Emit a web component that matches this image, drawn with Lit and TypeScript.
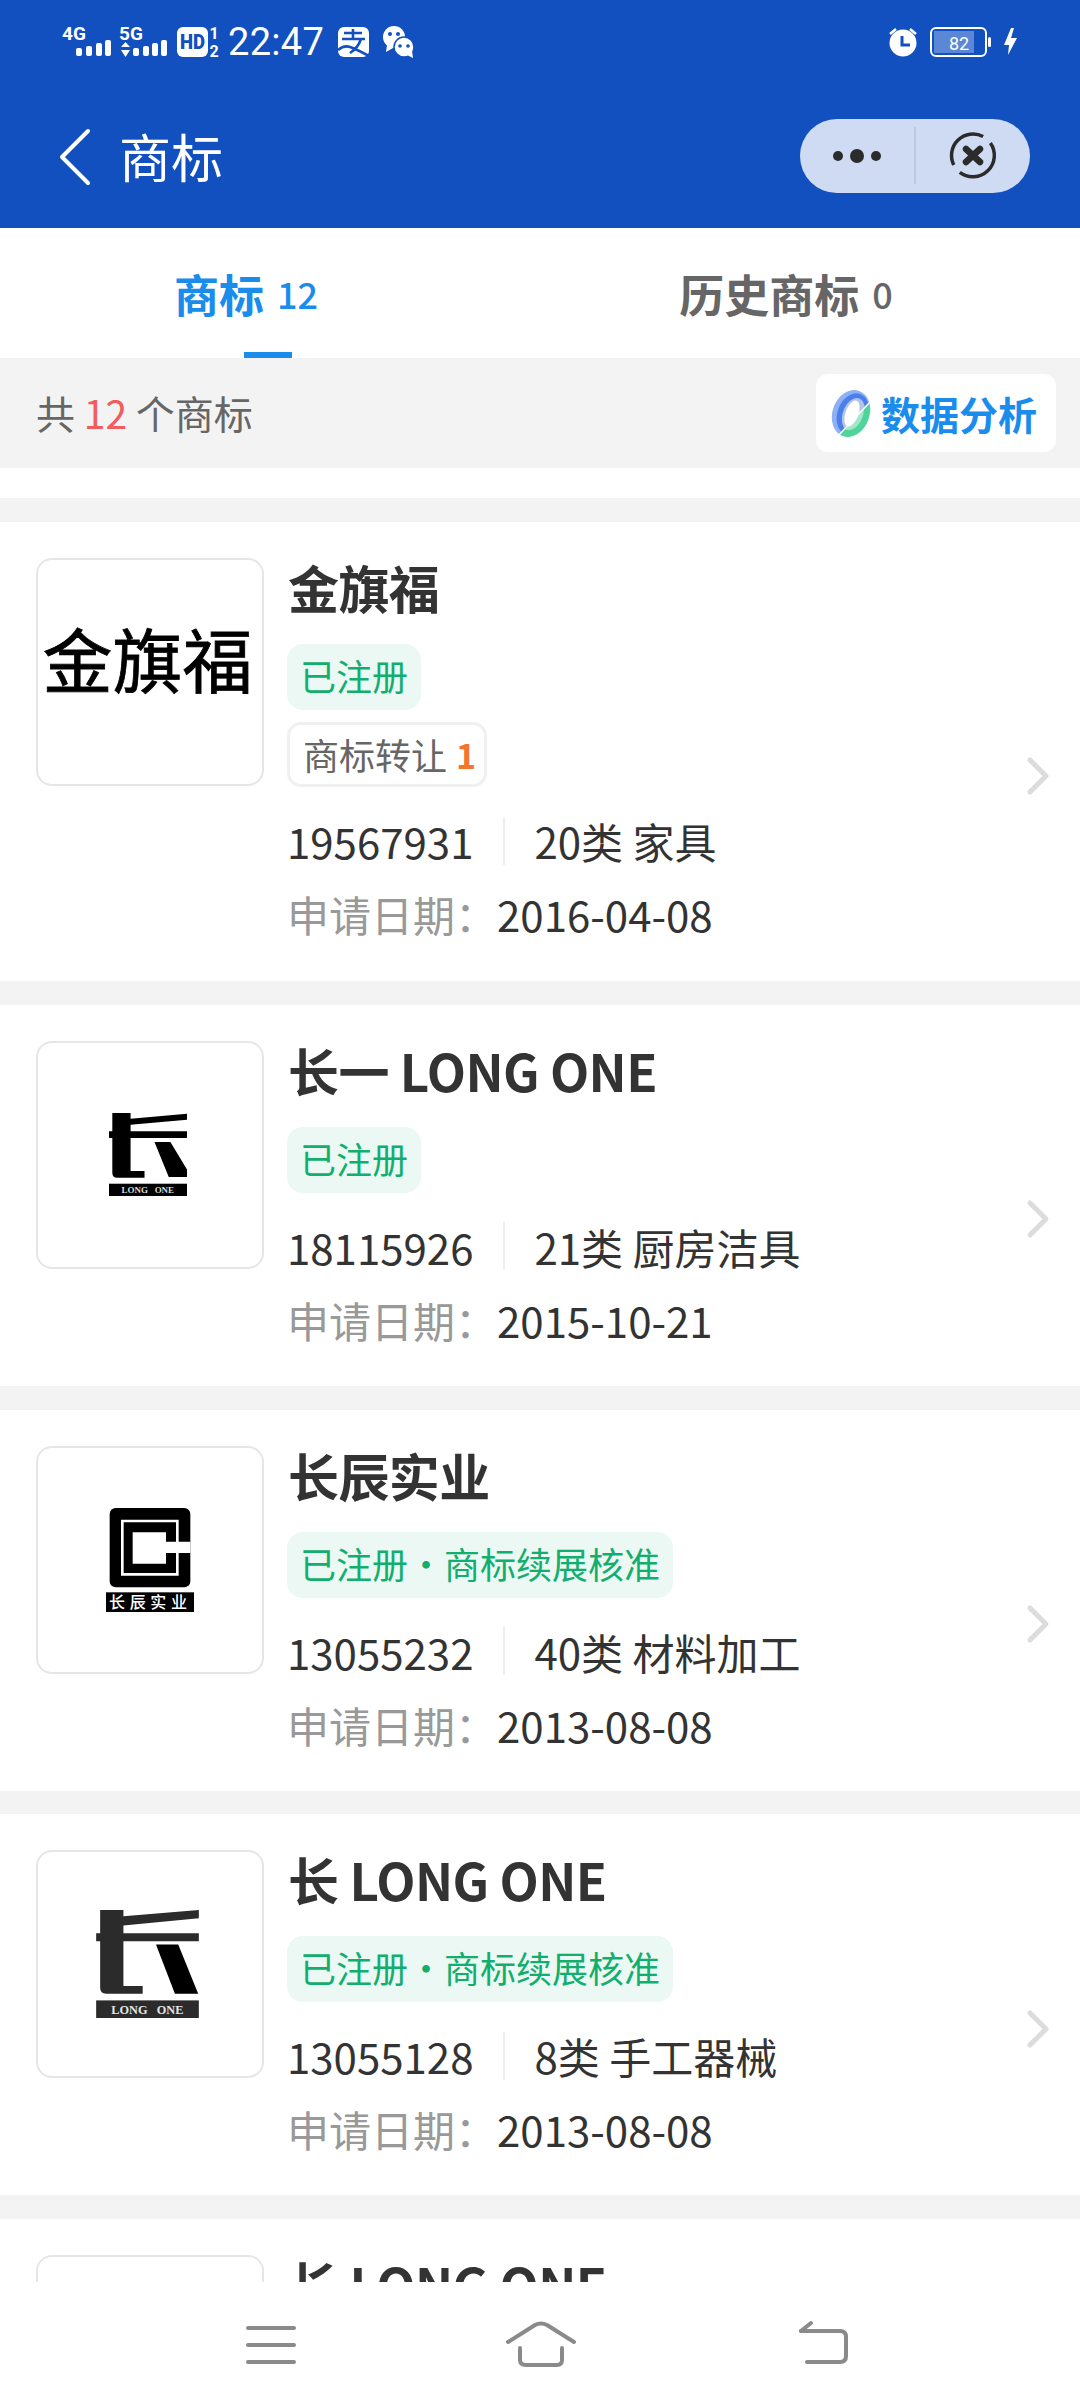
import { LitElement, html, css, svg } from "lit";
import { customElement } from "lit/decorators.js";

interface Item {
  title: string; status?: string; deal?: boolean; reg?: string; cat?: string; date?: string; logo: "text" | "cn1" | "cc" | "cn2" | "none";
}
const items: Item[] = [
  { title: "金旗福", status: "已注册", deal: true, reg: "19567931", cat: "20类 家具", date: "2016-04-08", logo: "text" },
  { title: "长一 LONG ONE", status: "已注册", reg: "18115926", cat: "21类 厨房洁具", date: "2015-10-21", logo: "cn1" },
  { title: "长辰实业", status: "已注册・商标续展核准", reg: "13055232", cat: "40类 材料加工", date: "2013-08-08", logo: "cc" },
  { title: "长 LONG ONE", status: "已注册・商标续展核准", reg: "13055128", cat: "8类 手工器械", date: "2013-08-08", logo: "cn2" },
  { title: "长 LONG ONE", logo: "none" },
];

const markSmall = svg`
  <svg class="mark shift" width="78" height="83" viewBox="0 0 235 250">
    <path fill="#000" d="M10 0H65V17L235 2V20L65 35V55H235V75H65V175H107V195H25Q10 195 10 180V75H0V55H10Z"/>
    <path fill="#000" d="M137 87H185L235 170V193H180Z"/>
    <rect y="213" width="235" height="37" fill="#000"/>
    <text x="117" y="241" text-anchor="middle" font-size="27" font-weight="700" fill="#ddd" font-family="Liberation Serif" xml:space="preserve">LONG   ONE</text>
  </svg>`;
const markLarge = svg`
  <svg class="mark shift" width="103" height="108" viewBox="0 0 309 325">
    <path fill="#2b2b2b" d="M12 0H82V19L309 0V25L82 47V70H309V94H82V229H140V252H30Q12 252 12 234V94H0V70H12Z"/>
    <path fill="#000" d="M180 104H247L307 252H237Z"/>
    <rect y="272" width="309" height="53" fill="#2b2b2b"/>
    <text x="154" y="312" text-anchor="middle" font-size="37" font-weight="700" fill="#e4e4e4" font-family="Liberation Serif" xml:space="preserve">LONG   ONE</text>
  </svg>`;
const markCc = svg`
  <svg class="mark" width="88" height="104" viewBox="252 205 264 312">
    <rect x="263" y="205" width="242" height="238" rx="18" fill="#000"/>
    <path fill="none" stroke="#fff" stroke-width="8" d="M466 310V244H301V404H466V340"/>
    <path fill="#fff" d="M332 278H432V306H505V340H432V372H332Z"/>
    <rect x="252" y="458" width="264" height="59" fill="#000"/>
    <text x="385" y="504" text-anchor="middle" font-size="48" font-weight="500" fill="#fff" font-family="Noto Sans CJK SC" letter-spacing="14">长辰实业</text>
  </svg>`;

@customElement("app-root")
export class AppRoot extends LitElement {
  static styles = css`
    :host { display: block; width: 1080px; height: 2408px; overflow: hidden; position: relative; background: #fff;
      font-family: "Noto Sans CJK SC", "Noto Sans", sans-serif; }
    .head { background: #1150be; height: 228px; color: #fff; position: relative; }
    .status { position: absolute; left: 0; top: 0; width: 1080px; height: 70px; }
    .time { position: absolute; left: 228px; top: 18px; font: 38px/48px Roboto, sans-serif; letter-spacing: .3px; }
    .bar { display: flex; align-items: center; height: 114px; padding-top: 100px; padding-left: 56px; }
    .title { font-size: 52px; line-height: 64px; margin-left: 25px; margin-top: -2px; }
    .capsule { position: absolute; left: 800px; top: 119px; width: 230px; height: 74px; border-radius: 37px; background: #cfdbf2; }
    .tabs { display: flex; height: 130px; position: relative; }
    .tab { flex: 1; box-sizing: border-box; padding-right: 48px; display: flex; justify-content: center; align-items: center; gap: 13px; font-size: 45px; font-weight: 700; color: #666; }
    .tab.on { color: #1a8cec; }
    .tab b { font-size: 36px; font-weight: 500; }
    .line { position: absolute; left: 244px; top: 124px; width: 48px; height: 6px; background: #1a8cec; }
    .count { height: 110px; box-sizing: border-box; background: #f3f3f3; display: flex; align-items: center; justify-content: space-between; padding: 0 24px 0 36px; font-size: 39px; color: #666; }
    .count > div:first-child { margin-top: -2px; }
    .count em { font-style: normal; color: #f25c5c; }
    .analysis { width: 240px; height: 78px; box-sizing: border-box; background: #fff; border-radius: 12px; display: flex; align-items: center; gap: 10px; padding-left: 15px; color: #1a8cec; font-size: 39px; font-weight: 700; }
    .gap { height: 30px; }
    .list { background: #f3f3f3; padding-top: 24px; display: flex; flex-direction: column; gap: 23.8px; }
    .card { background: #fff; display: flex; padding: 36px 0 30px 36px; position: relative; }
    .card:first-child { padding-bottom: 31px; }
    .logo { width: 228px; height: 228px; box-sizing: border-box; border: 2px solid #e6e6e6; border-radius: 16px; display: flex; align-items: center; justify-content: center; flex: none; }
    .logo.t { font-size: 70px; line-height: 1; font-weight: 400; color: #000; -webkit-text-stroke: 0.8px #000; white-space: nowrap; padding: 0 5px 29px 0; }
    .mark { display: block; overflow: visible; }
    .shift { margin-right: 5px; }
    .body { margin-left: 23px; display: flex; flex-direction: column; align-items: flex-start; }
    h2 { margin: 0 0 28px 1px; font-size: 51px; letter-spacing: -0.6px; line-height: 58px; font-weight: 700; color: #333; }
    .tags { display: flex; flex-direction: column; align-items: flex-start; gap: 12px; margin-bottom: 17px; }
    .tag { height: 66px; box-sizing: border-box; border-radius: 16px; background: #ebf8f3; color: #12ae6e; font-size: 36px; line-height: 63px; padding: 0 13px; }
    .deal { height: 65px; box-sizing: border-box; border: 3px solid #f0f0f0; border-radius: 14px; color: #666; font-size: 36px; line-height: 59px; padding: 0 8px 0 13px; display: flex; gap: 9px; }
    .deal b { color: #f5752f; font-weight: 700; font-size: 34px; }
    .row { display: flex; align-items: center; height: 73px; font-size: 42px; color: #333; margin-left: 0; }
    .sep { width: 2px; height: 48px; background: #eee; margin: 0 29px 0 30px; }
    .row span.k { color: #999; }
    .arrow { position: absolute; right: 30px; top: 50%; margin-top: 4px; }
    .nav { position: absolute; left: 0; bottom: 0; width: 1080px; height: 126px; background: #fff; }
    .nav svg { position: absolute; left: 0; top: 0; }
  `;

  logo(k: Item["logo"]) {
    if (k === "text") return html`<div class="logo t">金旗福</div>`;
    if (k === "cn1") return html`<div class="logo">${markSmall}</div>`;
    if (k === "cn2") return html`<div class="logo">${markLarge}</div>`;
    if (k === "cc") return html`<div class="logo">${markCc}</div>`;
    return html`<div class="logo"></div>`;
  }

  render() {
    return html`
      <div class="head">
        <div class="status">
          <svg width="1080" height="70" viewBox="0 0 1080 70" fill="#fff">
            <text x="62" y="40" font-size="19" font-weight="700" font-family="Roboto">4G</text>
            <text x="119" y="40" font-size="19" font-weight="700" font-family="Roboto">5G</text>
            <g><rect x="76" y="48" width="6" height="8" rx="2"/><rect x="86" y="46" width="6" height="10" rx="2"/><rect x="96" y="43" width="6" height="13" rx="2"/><rect x="105" y="40" width="6" height="16" rx="2"/></g>
            <path d="M121 47h9l-4.500-5ZM121 50h9l-4.500 7Z"/>
            <g><rect x="133" y="48" width="6" height="8" rx="2"/><rect x="143" y="46" width="6" height="10" rx="2"/><rect x="152" y="43" width="6" height="13" rx="2"/><rect x="161" y="40" width="6" height="16" rx="2"/></g>
            <rect x="177" y="27" width="31" height="30" rx="6"/>
            <text x="192.500" y="49" text-anchor="middle" font-size="20" font-weight="900" fill="#1150be" font-family="Roboto" textLength="25" lengthAdjust="spacingAndGlyphs">HD</text>
            <text x="214" y="39" text-anchor="middle" font-size="16" font-weight="700" font-family="Roboto">1</text>
            <text x="214" y="57" text-anchor="middle" font-size="16" font-weight="700" font-family="Roboto">2</text>
            <rect x="338" y="27" width="31" height="30" rx="6"/>
            <path fill="none" stroke="#1150be" stroke-width="2.600" d="M344 33h18M353 29v9M342 39h23M361 39q-3 9-11 14M338 50q6-5 12-3t19 9"/>
            <circle cx="394" cy="37" r="11"/>
            <path d="M387 45l-1 7 7-4Z"/>
            <circle cx="404" cy="47" r="10" stroke="#1150be" stroke-width="1.500"/>
            <path d="M407 55l6 3-1-7Z"/>
            <circle cx="390" cy="34" r="2" fill="#1150be"/><circle cx="398" cy="34" r="2" fill="#1150be"/>
            <circle cx="400" cy="46" r="1.800" fill="#1150be"/><circle cx="408" cy="46" r="1.800" fill="#1150be"/>
            <circle cx="903" cy="43" r="13.500"/>
            <path d="M890 34l6-5M916 34l-6-5" stroke="#fff" stroke-width="2.500" fill="none"/>
            <path d="M902 36v9h8" stroke="#1150be" stroke-width="3" fill="none"/>
            <rect x="931" y="28" width="55" height="28" rx="5" fill="none" stroke="#fff" stroke-width="2"/>
            <rect x="934" y="31" width="40" height="22" fill="#5c86d6"/>
            <rect x="988" y="37" width="3" height="10" rx="1.500"/>
            <text x="959" y="50" text-anchor="middle" font-size="18" font-family="Roboto">82</text>
            <path d="M1011 28l-7 17h5l-1 10 9-17h-6l3-10Z"/>
          </svg>
          <div class="time">22:47</div>
        </div>
        <div class="bar">
          <svg width="38" height="60" viewBox="0 0 38 60"><path d="M32 4L6 30L32 56" fill="none" stroke="#fff" stroke-width="4" stroke-linecap="round" stroke-linejoin="round"/></svg>
          <div class="title">商标</div>
        </div>
        <div class="capsule">
          <svg width="230" height="74" viewBox="0 0 230 74">
            <circle cx="38" cy="37" r="5" fill="#2b2b2b"/><circle cx="57" cy="37" r="7" fill="#2b2b2b"/><circle cx="76" cy="37" r="5" fill="#2b2b2b"/>
            <rect x="114" y="8" width="2" height="57" fill="#bcc9e2"/>
            <path fill="none" stroke="#2b2b2b" stroke-width="3.500" d="M153.700 45.900A21.500 21.500 0 0 1 183.100 17.500M190.400 23.900A21.500 21.500 0 0 1 159.800 53.400"/>
            <path fill="none" stroke="#2b2b2b" stroke-width="6.500" stroke-linecap="round" d="M166 30L180 43M180 30L166 43"/>
          </svg>
        </div>
      </div>
      <div class="tabs">
        <div class="tab on">商标<b>12</b></div>
        <div class="tab">历史商标<b>0</b></div>
        <div class="line"></div>
      </div>
      <div class="count">
        <div>共 <em>12</em> 个商标</div>
        <div class="analysis">
          <svg width="40" height="47" viewBox="0 0 40 47">
            <defs>
              <clipPath id="ul"><path d="M0 0H40V11L6 47H0Z"/></clipPath>
              <clipPath id="lr"><path d="M40 11V47H6Z"/></clipPath>
            </defs>
            <g clip-path="url(#ul)"><g transform="rotate(20 20 23.500)">
              <ellipse cx="20" cy="23.500" rx="18.500" ry="24" fill="#8fb0f5"/>
              <ellipse cx="22" cy="23.500" rx="15.500" ry="21.500" fill="#4a80ee"/>
              <ellipse cx="22.500" cy="23.500" rx="10.500" ry="17" fill="#b5c4e6"/>
            </g></g>
            <g clip-path="url(#lr)"><g transform="rotate(20 20 23.500)">
              <ellipse cx="20" cy="23.500" rx="18.500" ry="24" fill="#50d49c"/>
              <ellipse cx="21" cy="23.500" rx="11" ry="17" fill="#a4e8c9"/>
            </g></g>
            <ellipse cx="21" cy="23.500" rx="6.500" ry="13.500" transform="rotate(20 21 23.500)" fill="#fff"/>
            <path d="M6 47L40 11" stroke="#fff" stroke-width="1.500"/>
          </svg>
          数据分析
        </div>
      </div>
      <div class="gap"></div>
      <div class="list">
        ${items.map((it) => html`
          <div class="card">
            ${this.logo(it.logo)}
            <div class="body">
              <h2>${it.title}</h2>
              ${it.status ? html`
                <div class="tags">
                  <div class="tag">${it.status}</div>
                  ${it.deal ? html`<div class="deal">商标转让<b>1</b></div>` : ""}
                </div>
                <div class="row">${it.reg}<i class="sep"></i>${it.cat}</div>
                <div class="row"><span class="k">申请日期：</span>${it.date}</div>
              ` : ""}
            </div>
            ${it.status ? html`<svg class="arrow" width="24" height="40" viewBox="0 0 24 40"><path d="M4 4L20 20L4 36" fill="none" stroke="#dcdcdc" stroke-width="5" stroke-linecap="round" stroke-linejoin="round"/></svg>` : ""}
          </div>`)}
      </div>
      <div class="nav">
        <svg width="1080" height="126" viewBox="0 0 1080 126" fill="none" stroke="#8a8a8a" stroke-width="4" stroke-linecap="round" stroke-linejoin="round">
          <path d="M248 46h46M248 63h46M248 80h46"/>
          <path d="M508 60L535 43Q541 40 547 43L574 60"/>
          <path d="M520 66V78Q520 83 526 83H557Q562 83 562 78V66"/>
          <path d="M801 49H840Q846 49 846 55V74Q846 80 840 80H807"/>
          <path d="M811 41L801 49"/>
        </svg>
      </div>
    `;
  }
}
